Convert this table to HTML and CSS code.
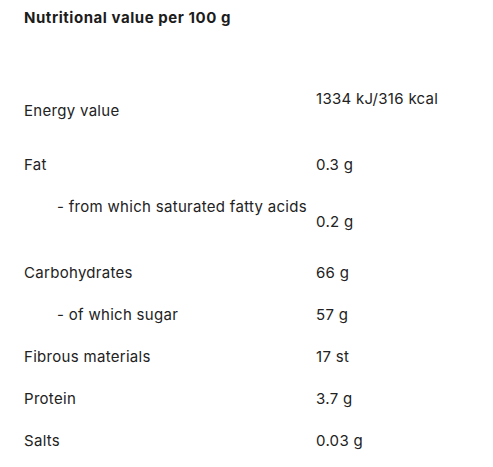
FILE: index.html
```html
<!DOCTYPE html>
<html lang="en">
<head>
  <meta charset="UTF-8" />
  <title>Nutritional value</title>
  <link rel="stylesheet" href="styles.css">
</head>
<body>

  <div class="nutrition">
    <h3>Nutritional value per 100 g</h3>

    <div class="row tall energy">
      <div class="label">Energy value</div>
      <div class="value">1334 kJ/316 kcal</div>
    </div>
    <div class="row">
      <div class="label">Fat</div>
      <div class="value">0.3 g</div>
    </div>
    <div class="row tall sub-low">
      <div class="label sub">- from which saturated fatty acids</div>
      <div class="value">0.2 g</div>
    </div>
    <div class="row">
      <div class="label">Carbohydrates</div>
      <div class="value">66 g</div>
    </div>
    <div class="row">
      <div class="label sub">- of which sugar</div>
      <div class="value">57 g</div>
    </div>
    <div class="row">
      <div class="label">Fibrous materials</div>
      <div class="value">17 st</div>
    </div>
    <div class="row">
      <div class="label">Protein</div>
      <div class="value">3.7 g</div>
    </div>
    <div class="row">
      <div class="label">Salts</div>
      <div class="value">0.03 g</div>
    </div>
  </div>

</body>
</html>
```

FILE: styles.css
```css
* {
  box-sizing: border-box;
}
body {
  margin: 0;
  background: white;
  font-family: 'Inter', sans-serif;
  font-size: 15px;
  line-height: 20px;
  letter-spacing: 0.3px;
  color: #222;
}
.nutrition {
  padding: 8px 24px 0;
}
h3 {
  margin: 0 0 61px;
  font-size: 15px;
  line-height: 20px;
  font-weight: 700;
  letter-spacing: 0.55px;
  color: #1c1c1c;
}
.row {
  display: flex;
  min-height: 42px;
}
.row.tall {
  min-height: 66px;
}
.label {
  width: 292px;
  flex-shrink: 0;
}
.label.sub {
  padding-left: 33px;
}
.energy .label {
  padding-top: 12px;
}
.sub-low .value {
  padding-top: 15px;
}
```
